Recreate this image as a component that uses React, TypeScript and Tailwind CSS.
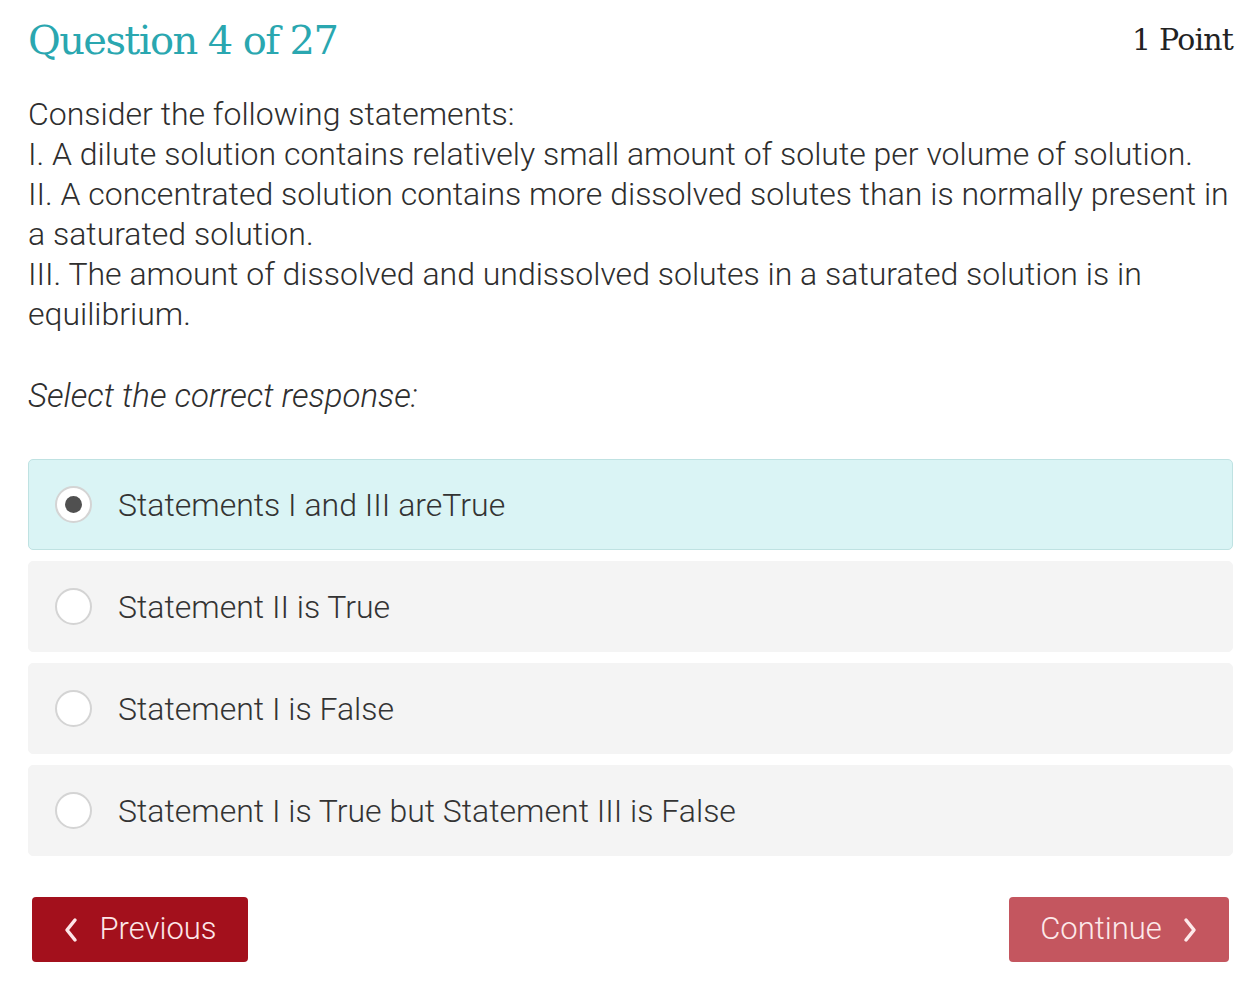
import React from "react";

const options = [
  { label: "Statements I and III areTrue", selected: true },
  { label: "Statement II is True", selected: false },
  { label: "Statement I is False", selected: false },
  { label: "Statement I is True but Statement III is False", selected: false },
];

function Radio({ selected }: { selected: boolean }) {
  return (
    <div className="w-[37px] h-[37px] rounded-full border-2 border-[#d4d4d4] bg-white flex items-center justify-center shrink-0">
      {selected && <div className="w-[17px] h-[17px] rounded-full bg-[#505050]" />}
    </div>
  );
}

function Chevron({ dir }: { dir: "left" | "right" }) {
  return (
    <svg width="16" height="28" viewBox="0 0 16 28" fill="none" stroke="currentColor" strokeWidth="3.5" strokeLinecap="round" strokeLinejoin="round">
      {dir === "left" ? <path d="M12 4 L4 14 L12 24" /> : <path d="M4 4 L12 14 L4 24" />}
    </svg>
  );
}

export default function App() {
  return (
    <div className="w-[1255px] h-[996px] bg-white pl-[28px] pr-[22px] pt-[12px] text-[#333]" style={{ fontFamily: "Roboto, 'Noto Sans', sans-serif" }}>
      <div className="flex items-center justify-between h-[56px]">
        <h1 className="text-[40px] text-[#2aa7b0] leading-none" style={{ fontFamily: "'DejaVu Serif', 'Liberation Serif', serif", fontWeight: 400, letterSpacing: "-1.6px" }}>
          Question 4 of 27
        </h1>
        <div className="text-[30px] text-[#222] leading-none" style={{ fontFamily: "'DejaVu Serif', 'Liberation Serif', serif", letterSpacing: "-0.8px" }}>
          1 Point
        </div>
      </div>

      <div className="mt-[26px] text-[32px] leading-[40px] font-light text-[#2e2e2e]">
        <p>Consider the following statements:</p>
        <p>I. A dilute solution contains relatively small amount of solute per volume of solution.</p>
        <p>
          II. A concentrated solution contains more dissolved solutes than is normally present in
          <br />a saturated solution.
        </p>
        <p>
          III. The amount of dissolved and undissolved solutes in a saturated solution is in
          <br />
          equilibrium.
        </p>
      </div>

      <p className="mt-[42px] text-[33px] leading-[40px] font-light italic text-[#2e2e2e]">Select the correct response:</p>

      <div className="mt-[43px] flex flex-col gap-[11px]">
        {options.map((o) => (
          <div
            key={o.label}
            className={
              o.selected
                ? "h-[91px] rounded-[5px] border border-[#bfe2e2] bg-[#daf4f5] flex items-center pl-[26px] gap-[26px]"
                : "h-[91px] rounded-[5px] border border-[#f4f4f4] bg-[#f4f4f4] flex items-center pl-[26px] gap-[26px]"
            }
          >
            <Radio selected={o.selected} />
            <span className="text-[32px] font-light text-[#333]">{o.label}</span>
          </div>
        ))}
      </div>

      <div className="mt-[41px] flex justify-between pl-[4px] pr-[4px]">
        <button className="w-[216px] h-[65px] rounded-[4px] bg-[#a3101c] text-[#fde6e8] flex items-center justify-center gap-[20px] text-[31px] font-light">
          <Chevron dir="left" />
          <span>Previous</span>
        </button>
        <button className="w-[220px] h-[65px] rounded-[4px] bg-[#c4565f] text-[#fde9ea] flex items-center justify-center gap-[20px] text-[31px] font-light">
          <span>Continue</span>
          <Chevron dir="right" />
        </button>
      </div>
    </div>
  );
}
